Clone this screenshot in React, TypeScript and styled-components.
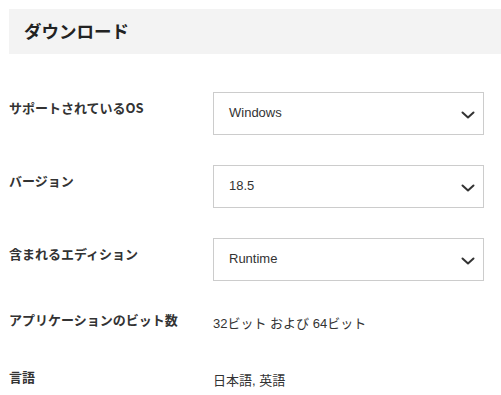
import React from "react";
import styled, { createGlobalStyle } from "styled-components";

const GlobalStyle = createGlobalStyle`
  html, body { margin: 0; padding: 0; background: #fff; }
  body { font-family: "Liberation Sans", "Noto Sans CJK JP", sans-serif; color: #333; }
`;

const Page = styled.div`
  padding: 9px 17px 0 9px;
  overflow: hidden;
`;

const Header = styled.div`
  height: 45px;
  margin-right: -17px;
  box-sizing: border-box;
  padding-left: 15px;
  display: flex;
  align-items: center;
  background-color: #f3f3f3;
  background-image:
    radial-gradient(circle, #ebebeb 0.6px, transparent 0.7px),
    radial-gradient(circle, #ebebeb 0.6px, transparent 0.7px);
  background-size: 10px 8px, 10px 8px;
  background-position: 0 3px, 5px 7px;
`;

const Title = styled.h2`
  margin: 0;
  font-family: "Noto Sans CJK JP", sans-serif;
  font-weight: 700;
  font-size: 17.5px;
  line-height: 24px;
  color: #222;
  padding-bottom: 2px;
`;

const Form = styled.div`
  display: flex;
  flex-direction: column;
  margin-top: 38px;
`;

const Row = styled.div<{ $gap: number }>`
  display: grid;
  grid-template-columns: 204px 271px;
  align-items: start;
  margin-bottom: ${(p) => p.$gap}px;
`;

const Label = styled.div`
  padding-top: 6px;
  font-family: "Noto Sans CJK JP", sans-serif;
  font-weight: 700;
  font-size: 13px;
  line-height: 20px;
  color: #333;
`;

const Value = styled.div`
  padding-top: 10px;
  padding-bottom: 4px;
  font-family: "Liberation Sans", "Noto Sans CJK JP", sans-serif;
  font-size: 13px;
  line-height: 20px;
  color: #333;
`;

const SelectBox = styled.div`
  height: 43px;
  box-sizing: border-box;
  border: 1px solid #cccccc;
  background: #fff;
  display: flex;
  align-items: center;
  justify-content: space-between;
  padding: 0 8px 0 15px;
  font-family: "Liberation Sans", "Noto Sans CJK JP", sans-serif;
  font-size: 13px;
  color: #333;
`;

const SelectText = styled.span`
  margin-top: -2px;
`;

const Chevron = () => (
  <svg width="14" height="10" viewBox="0 0 14 10" style={{ marginTop: 3 }}>
    <path d="M1.5 2.5 L7 7.5 L12.5 2.5" fill="none" stroke="#333" strokeWidth="2" strokeLinecap="round" strokeLinejoin="round" />
  </svg>
);

const Select = ({ value }: { value: string }) => (
  <SelectBox>
    <SelectText>{value}</SelectText>
    <Chevron />
  </SelectBox>
);

export default function App() {
  return (
    <>
      <GlobalStyle />
      <Page>
        <Header>
          <Title>ダウンロード</Title>
        </Header>
        <Form>
          <Row $gap={30}>
            <Label>サポートされているOS</Label>
            <Select value="Windows" />
          </Row>
          <Row $gap={30}>
            <Label>バージョン</Label>
            <Select value="18.5" />
          </Row>
          <Row $gap={23}>
            <Label>含まれるエディション</Label>
            <Select value="Runtime" />
          </Row>
          <Row $gap={23}>
            <Label>アプリケーションのビット数</Label>
            <Value>32ビット および 64ビット</Value>
          </Row>
          <Row $gap={0}>
            <Label>言語</Label>
            <Value>日本語, 英語</Value>
          </Row>
        </Form>
      </Page>
    </>
  );
}
